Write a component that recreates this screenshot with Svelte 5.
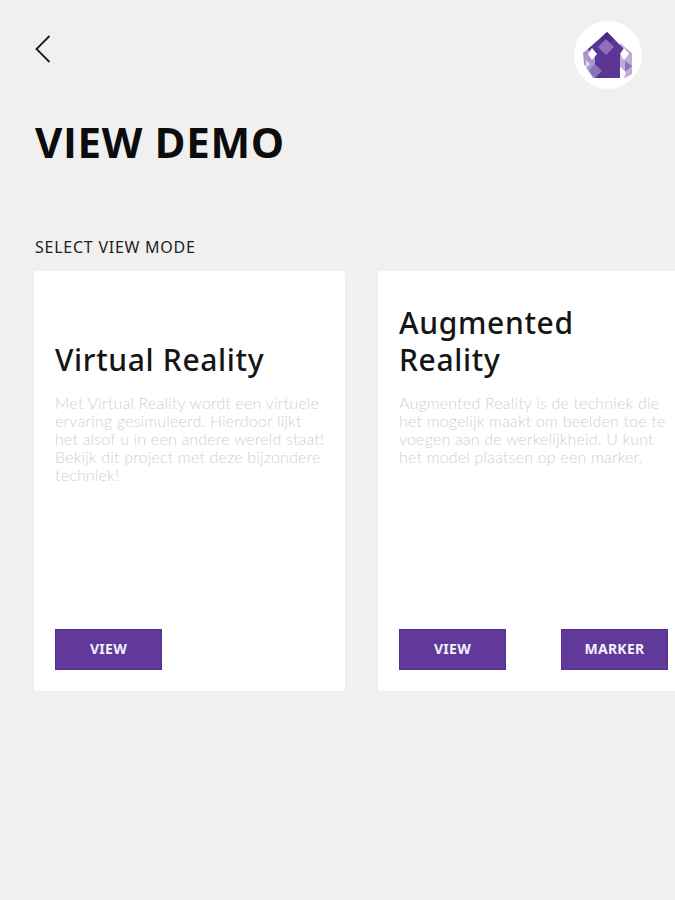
<script lang="ts">
	interface Mode {
		title: string;
		text: string;
		actions: string[];
	}

	const modes: Mode[] = [
		{
			title: 'Virtual Reality',
			text: 'Met Virtual Reality wordt een virtuele ervaring gesimuleerd. Hierdoor lijkt het alsof u in een andere wereld staat! Bekijk dit project met deze bijzondere techniek!',
			actions: ['VIEW']
		},
		{
			title: 'Augmented Reality',
			text: 'Augmented Reality is de techniek die het mogelijk maakt om beelden toe te voegen aan de werkelijkheid. U kunt het model plaatsen op een marker.',
			actions: ['VIEW', 'MARKER']
		}
	];
</script>

<main class="page">
	<header class="topbar">
		<button class="back" aria-label="Back">
			<svg width="18" height="30" viewBox="0 0 18 30" fill="none">
				<path d="M15.5 2 L2.5 15 L15.5 28" stroke="#1a1a1a" stroke-width="1.8" />
			</svg>
		</button>
		<div class="logo">
			<svg width="50" height="50" viewBox="0 0 50 50">
				<!-- light side facets behind the dark body -->
				<path d="M0 23 L12 13 V48 H10 L1 34 Z" fill="#a994cc" />
				<path d="M37 13 L49 23 V44 L42 48 H37 Z" fill="#bfaeda" />
				<path d="M24 2 L42 20 L37 26 V48 H12 V28 L5 19 Z" fill="#5c3696" />
				<path d="M24 2 L31 9 L24 15 L17 9 Z" fill="#4c2a88" />
				<path d="M23 9 L31 17 L23 25 L15 17 Z" fill="#8d72ba" />
				<path d="M9 18 L14 24 L9 30 L5 24 Z" fill="#fff" />
				<path d="M41 18 L46 24 L41 30 L37 24 Z" fill="#fff" />
				<path d="M12 34 L19 41 L12 48 L6 41 Z" fill="#8a70b8" />
				<path d="M3 30 L7 34 L3 38 Z" fill="#e4dcf0" />
				<path d="M37 37 L43 42 L41 48 H37 Z" fill="#fff" />
				<path d="M42 31 L49 36 L42 42 Z" fill="#8a70b8" />
			</svg>
		</div>
	</header>

	<h1 class="title">VIEW DEMO</h1>
	<h2 class="subtitle">SELECT VIEW MODE</h2>

	<section class="cards">
		{#each modes as mode}
			<article class="card">
				<h3 class="card-title">{mode.title}</h3>
				<p class="card-text">{mode.text}</p>
				<div class="actions">
					{#each mode.actions as action}
						<button class="action">{action}</button>
					{/each}
				</div>
			</article>
		{/each}
	</section>
</main>

<style>
	:global(body) {
		background: #f0f0f0;
		overflow: hidden;
	}

	.page {
		height: 900px;
		padding: 21px 0 0 34px;
		box-sizing: border-box;
		overflow: hidden;
		font-family: 'Noto Sans', sans-serif;
	}

	.topbar {
		display: flex;
		justify-content: space-between;
		align-items: flex-start;
		padding-right: 33px;
	}

	.back {
		margin: 13px 0 0;
		padding: 0;
		border: 0;
		background: none;
		height: 30px;
	}

	.logo {
		width: 68px;
		height: 68px;
		border-radius: 50%;
		background: #fff;
		display: flex;
		align-items: center;
		justify-content: center;
	}

	.title {
		margin: 28px 0 0 1px;
		font-family: 'Open Sans', sans-serif;
		font-size: 42px;
		line-height: 50px;
		font-weight: 700;
		letter-spacing: 0.65px;
		color: #0c0c0c;
	}

	.subtitle {
		margin: 69px 0 0 1px;
		font-size: 16px;
		line-height: 22px;
		font-weight: 400;
		letter-spacing: 0.75px;
		color: #1e1e1e;
	}

	.cards {
		display: flex;
		gap: 33px;
		margin-top: 13px;
		width: 800px;
	}

	.card {
		flex: none;
		width: 311px;
		height: 420px;
		box-sizing: border-box;
		padding: 33px 20px 21px 21px;
		background: #fff;
		border-radius: 2px;
		display: flex;
		flex-direction: column;
	}

	.card-title {
		margin: 0;
		height: 74px;
		display: flex;
		align-items: flex-end;
		font-size: 30px;
		line-height: 37px;
		font-weight: 500;
		letter-spacing: 0.65px;
		color: #151515;
	}

	.card-text {
		margin: 16px 0 0;
		font-family: Lato, sans-serif;
		font-size: 16px;
		line-height: 18px;
		font-weight: 300;
		letter-spacing: 0.18px;
		color: #d0d0d0;
	}

	.actions {
		margin-top: auto;
		display: flex;
		gap: 55px;
	}

	.action {
		flex: none;
		width: 107px;
		height: 41px;
		padding: 0 0 2px;
		border: 1px solid #56308f;
		background: #60399a;
		color: #f4f0fa;
		font-family: 'Noto Sans', sans-serif;
		font-size: 14px;
		font-weight: 700;
		letter-spacing: 0.3px;
	}
</style>
